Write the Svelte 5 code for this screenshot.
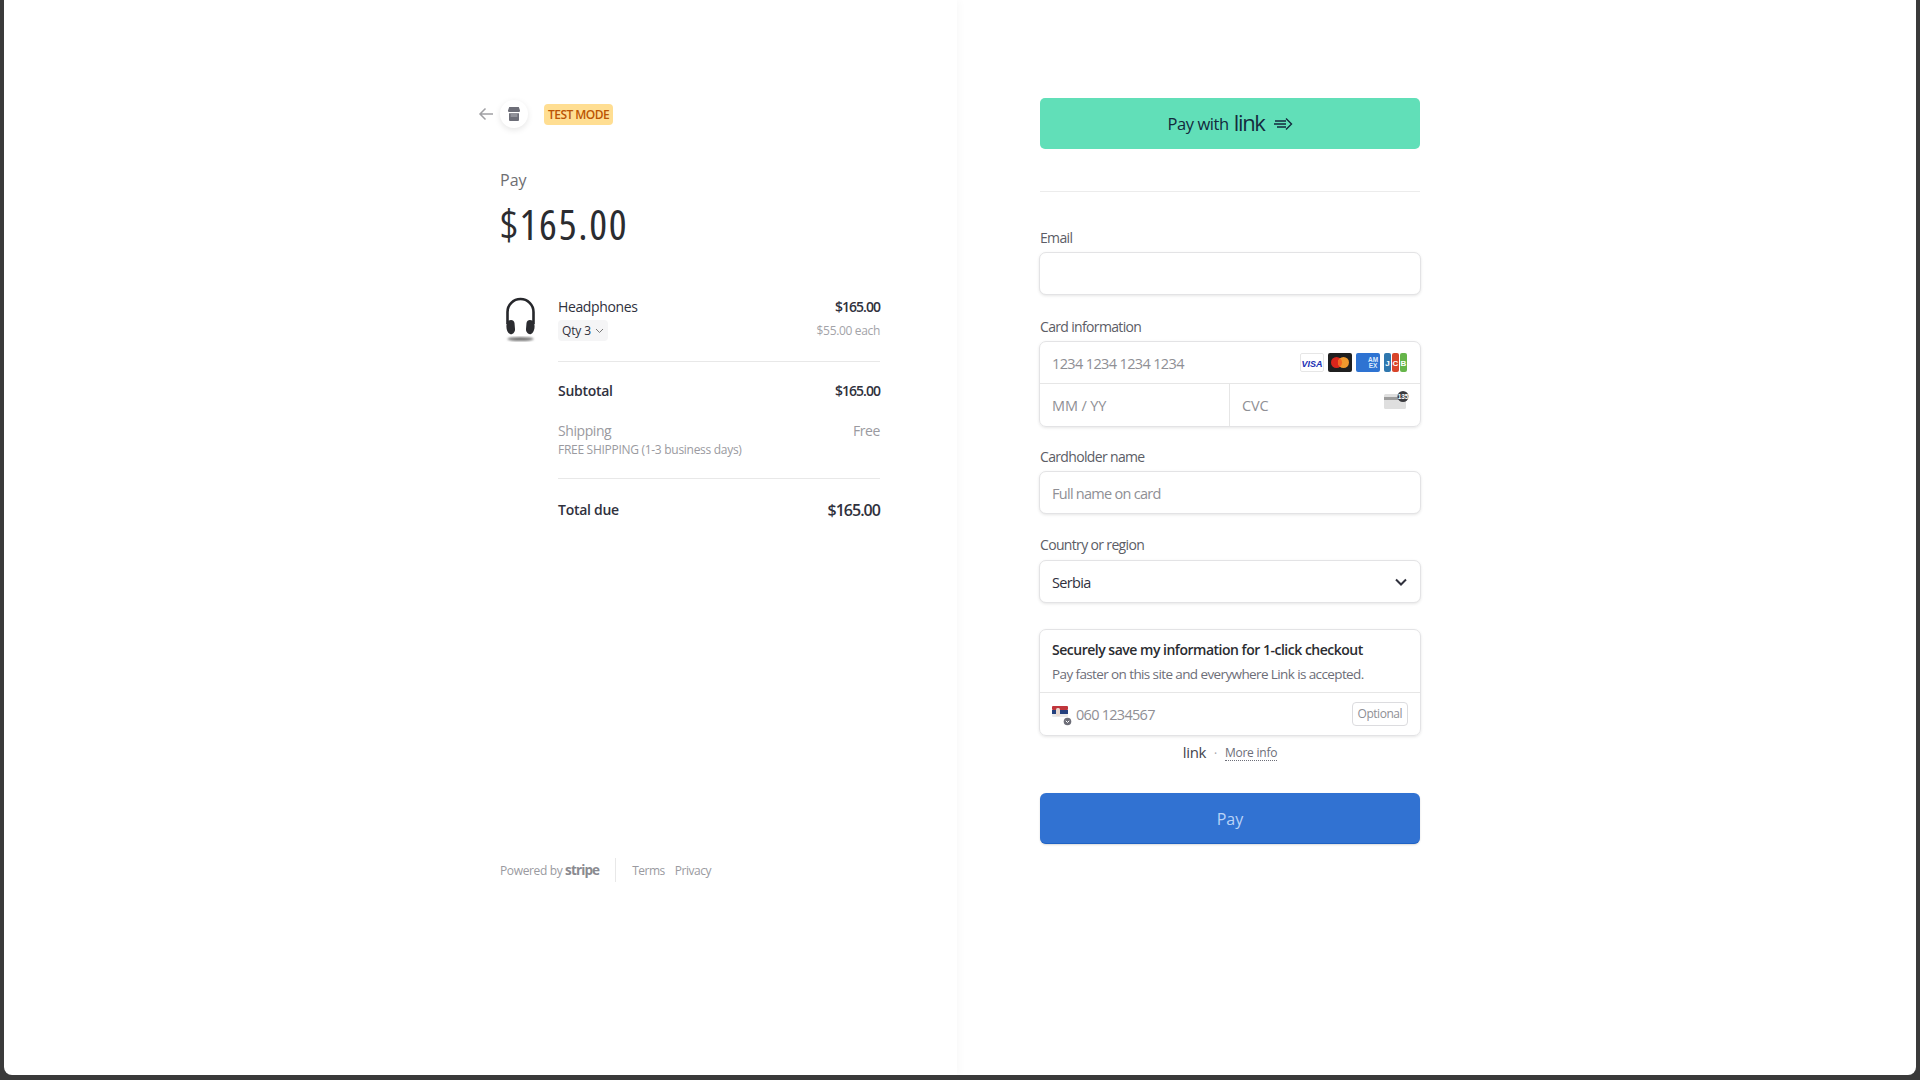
<script>
  let email = $state("");
  let name = $state("");
  const totals = [
    { label: "Subtotal", value: "$165.00" }
  ];
</script>

<div class="frame">
  <div class="page">
    <section class="summary">
      <div class="summary-inner">
        <header class="top">
          <svg class="back" width="16" height="14" viewBox="0 0 16 14" fill="none" stroke="#a0a0a4" stroke-width="1.5">
            <path d="M15 7H2M7.5 1.5 2 7l5.5 5.5" />
          </svg>
          <span class="store">
            <svg width="12" height="14" viewBox="0 0 12 14">
              <path d="M1.2 0h9.6L12 3.6a1.6 1.6 0 0 1-1 1.5H1a1.6 1.6 0 0 1-1-1.5z" fill="#6d6e78" />
              <path d="M1 6.2h10V13a1 1 0 0 1-1 1H2a1 1 0 0 1-1-1z" fill="#6d6e78" />
              <rect x="2.6" y="7" width="6.8" height="3" fill="#fff" opacity=".25" />
            </svg>
          </span>
          <span class="badge">TEST MODE</span>
        </header>

        <div class="pay-label">Pay</div>
        <div class="amount">$165.00</div>

        <div class="item">
          <svg class="thumb" width="40" height="48" viewBox="0 0 40 48">
            <defs>
              <filter id="soft"><feGaussianBlur stdDeviation="1.2" /></filter>
            </defs>
            <ellipse cx="20.500" cy="43" rx="13" ry="2" fill="#777" filter="url(#soft)" />
            <path d="M7.500 28V16a13 13 0 0 1 26 0v12" fill="none" stroke="#26272b" stroke-width="2.6" />
            <path d="M8 25c3-2 6-1 6.500 2l.5 6c.3 3-2.500 6-5 5-3.500-1.500-5-9-2-13z" fill="#2b2c30" />
            <path d="M33 25c-3-2-6-1-6.500 2l-.5 6c-.3 3 2.500 6 5 5 3.500-1.500 5-9 2-13z" fill="#2b2c30" />
          </svg>
          <div class="item-body">
            <div class="item-row">
              <span class="item-name">Headphones</span>
              <span class="strong">$165.00</span>
            </div>
            <div class="item-row sub-row">
              <span class="qty">Qty 3
                <svg width="9" height="6" viewBox="0 0 9 6" fill="none" stroke="#777" stroke-width="1"><path d="M1 1l3.500 3.500L8 1" /></svg>
              </span>
              <span class="each">$55.00 each</span>
            </div>
          </div>
        </div>

        <div class="totals">
          {#each totals as t}
            <div class="line subtotal">
              <span class="semi">{t.label}</span>
              <span class="strong">{t.value}</span>
            </div>
          {/each}
          <div class="line shipping">
            <div>
              <div class="ship-name">Shipping</div>
              <div class="ship-note">FREE SHIPPING (1-3 business days)</div>
            </div>
            <span class="ship-name">Free</span>
          </div>
          <div class="line total">
            <span class="semi">Total due</span>
            <span class="total-value">$165.00</span>
          </div>
        </div>

        <footer class="foot">
          <span class="powered">Powered by <b class="stripe">stripe</b></span>
          <i class="foot-sep"></i>
          <span class="foot-link">Terms</span>
          <span class="foot-link">Privacy</span>
        </footer>
      </div>
    </section>

    <section class="form">
      <div class="form-inner">
        <button class="link-btn">
          <span>Pay with</span>
          <span class="link-word">link</span>
          <svg width="19" height="14" viewBox="0 0 19 14" fill="none" stroke="#13293d" stroke-width="1.4">
            <path d="M1 4h11M0 7h12M3 10h9M12 1.500 17.500 7 12 12.500" />
          </svg>
        </button>
        <hr class="rule" />

        <label class="field-label first" for="email">Email</label>
        <input id="email" class="box" bind:value={email} />

        <div class="field-label">Card information</div>
        <div class="card-box">
          <div class="card-row">
            <span class="ph digits">1234 1234 1234 1234</span>
            <span class="brands">
              <svg width="24" height="19" viewBox="0 0 24 19">
                <rect x=".5" y=".5" width="23" height="18" rx="1.500" fill="#fff" stroke="#e6e6e6" />
                <text x="12" y="13.500" text-anchor="middle" class="visa">VISA</text>
              </svg>
              <svg width="24" height="19" viewBox="0 0 24 19">
                <rect width="24" height="19" rx="2" fill="#1f1f1f" />
                <circle cx="8.500" cy="9.500" r="5.500" fill="#d9261c" />
                <circle cx="15.500" cy="9.500" r="5.500" fill="#f0992e" />
                <path d="M12 5.200a5.500 5.500 0 0 1 0 8.600 5.500 5.500 0 0 1 0-8.600z" fill="#f26522" />
              </svg>
              <svg width="24" height="19" viewBox="0 0 24 19">
                <rect width="24" height="19" rx="2" fill="#2e73d2" />
                <text x="17" y="8.500" text-anchor="middle" class="amex">AM</text>
                <text x="17" y="15" text-anchor="middle" class="amex">EX</text>
              </svg>
              <svg width="23" height="19" viewBox="0 0 23 19">
                <rect width="7" height="19" rx="2" fill="#2f77ae" />
                <rect x="8" width="7" height="19" rx="2" fill="#d8442a" />
                <rect x="16" width="7" height="19" rx="2" fill="#66b54a" />
                <text x="3.500" y="13" text-anchor="middle" class="jcb">J</text>
                <text x="11.500" y="13" text-anchor="middle" class="jcb">C</text>
                <text x="19.500" y="13" text-anchor="middle" class="jcb">B</text>
              </svg>
            </span>
          </div>
          <div class="card-split">
            <div class="cell expiry"><span class="ph">MM / YY</span></div>
            <div class="cell cvc">
              <span class="ph">CVC</span>
              <svg class="cvc-icon" width="25" height="18" viewBox="0 0 25 18">
                <rect x="0" y="3" width="22" height="15" rx="1.500" fill="#dfdfdf" />
                <rect x="0" y="6" width="22" height="3" fill="#9d9d9d" />
                <circle cx="19" cy="5.500" r="5.500" fill="#3b3b3f" />
                <text x="19" y="8" text-anchor="middle" class="cvc-num">135</text>
              </svg>
            </div>
          </div>
        </div>

        <label class="field-label cardholder" for="cardholder">Cardholder name</label>
        <input id="cardholder" class="box" placeholder="Full name on card" bind:value={name} />

        <div class="field-label country">Country or region</div>
        <div class="box select">
          <span>Serbia</span>
          <svg width="12" height="8" viewBox="0 0 12 8" fill="none" stroke="#30313d" stroke-width="2"><path d="M1 1.500l5 5 5-5" /></svg>
        </div>

        <div class="save-box">
          <div class="save-text">
            <div class="save-title">Securely save my information for 1-click checkout</div>
            <div class="save-sub">Pay faster on this site and everywhere Link is accepted.</div>
          </div>
          <div class="phone">
            <span class="flag">
              <svg width="20" height="20" viewBox="0 0 20 20">
                <rect y="0" width="16" height="4" rx="1" fill="#c0363c" />
                <rect y="4" width="16" height="4" fill="#24407e" />
                <rect y="8" width="16" height="3" rx="1" fill="#e8e8e8" />
                <rect x="4" y="2" width="4" height="8" rx="1.500" fill="#e9d9d0" />
                <circle cx="15.500" cy="15.500" r="3.800" fill="#6d6e78" />
                <path d="M13.800 14.800l1.700 1.700 1.700-1.700" fill="none" stroke="#fff" stroke-width="1" />
              </svg>
            </span>
            <span class="phone-ph">060 1234567</span>
            <span class="optional">Optional</span>
          </div>
        </div>

        <div class="link-row">
          <span class="link-mini">link</span>
          <span class="dot">·</span>
          <span class="more">More info</span>
        </div>

        <button class="pay">Pay</button>
      </div>
    </section>
  </div>
</div>

<style>
  :global(body) {
    margin: 0;
    background: #3a3a3a;
  }

  .frame {
    height: 1080px;
    box-sizing: border-box;
    padding: 0 4px 5px 4px;
    background: #3a3a3a;
    font-family: "Open Sans", "Noto Sans", sans-serif;
    font-stretch: 90%;
    font-size: 14px;
    color: #30313d;
  }

  .page {
    height: 100%;
    display: flex;
    background: #fff;
    border-radius: 0 0 8px 8px;
    overflow: hidden;
  }

  .summary {
    width: 953px;
    box-sizing: border-box;
    padding: 100px 0 0 496px;
    box-shadow: 2px 0 8px rgba(0, 0, 0, 0.03);
  }

  .summary-inner {
    width: 380px;
  }

  .top {
    display: flex;
    align-items: center;
    height: 28px;
    margin-left: -22px;
  }

  .back {
    margin-right: 6px;
  }

  .store {
    width: 28px;
    height: 28px;
    border-radius: 50%;
    display: flex;
    align-items: center;
    justify-content: center;
    box-shadow: 0 2px 6px rgba(0, 0, 0, 0.1);
    margin-right: 16px;
  }

  .badge {
    height: 21px;
    line-height: 21px;
    padding: 0 4px;
    background: #ffde92;
    border-radius: 4px;
    color: #bb5504;
    font-size: 12px;
    font-weight: 600;
    letter-spacing: -0.045em;
  }

  .pay-label {
    margin-top: 41px;
    font-size: 16px;
    line-height: 22px;
    color: #6e6e72;
  }

  .amount {
    margin-top: 9px;
    font-stretch: 75%;
    font-size: 42px;
    line-height: 48px;
    font-weight: 500;
    color: #2b2c30;
    letter-spacing: 0.04em;
  }

  .item {
    display: flex;
    margin-top: 48px;
  }

  .thumb {
    width: 40px;
    margin-right: 18px;
    flex: none;
  }

  .item-body {
    flex: 1;
  }

  .item-row {
    display: flex;
    justify-content: space-between;
    align-items: center;
    height: 20px;
  }

  .sub-row {
    height: 21px;
    margin-top: 4px;
  }

  .item-name {
    font-weight: 500;
    letter-spacing: -0.026em;
  }

  .semi {
    font-weight: 600;
    letter-spacing: -0.02em;
  }

  .strong {
    font-weight: 600;
    letter-spacing: -0.07em;
  }

  .qty {
    display: inline-flex;
    align-items: center;
    gap: 4px;
    height: 21px;
    padding: 0 4px;
    background: #f5f5f6;
    border-radius: 4px;
    font-size: 12px;
    font-weight: 500;
    letter-spacing: -0.01em;
  }

  .each {
    font-size: 12px;
    color: #a3a3a8;
    letter-spacing: -0.028em;
  }

  .totals {
    margin-left: 58px;
    margin-top: 17px;
    border-top: 1px solid #e8e8e8;
  }

  .line {
    display: flex;
    justify-content: space-between;
  }

  .subtotal {
    margin-top: 19px;
    line-height: 20px;
  }

  .shipping {
    margin-top: 20px;
    padding-bottom: 20px;
    border-bottom: 1px solid #e8e8e8;
    align-items: flex-start;
  }

  .ship-name {
    line-height: 20px;
    color: #9a9aa0;
    letter-spacing: -0.03em;
  }

  .ship-note {
    font-size: 12px;
    line-height: 17px;
    color: #9a9aa0;
    letter-spacing: -0.024em;
  }

  .total {
    margin-top: 20px;
    line-height: 22px;
    align-items: center;
  }

  .total-value {
    font-size: 16px;
    font-weight: 600;
    letter-spacing: -0.06em;
  }

  .foot {
    display: flex;
    align-items: center;
    margin-top: 337px;
    height: 24px;
    font-size: 12px;
    color: #9a9aa0;
  }

  .powered {
    letter-spacing: -0.03em;
  }

  .stripe {
    font-size: 13.500px;
    font-weight: 700;
    color: #8a8a90;
    letter-spacing: -0.065em;
  }

  .foot-sep {
    width: 1px;
    height: 24px;
    background: #e8e8e8;
    margin: 0 16px;
  }

  .foot-link {
    margin-right: 10px;
    letter-spacing: -0.04em;
  }

  .form {
    flex: 1;
    padding: 98px 0 0 83px;
  }

  .form-inner {
    width: 380px;
  }

  .link-btn {
    width: 100%;
    height: 51px;
    display: flex;
    align-items: center;
    justify-content: center;
    gap: 5px;
    border: 0;
    border-radius: 5px;
    background: #61dfb8;
    font: inherit;
    font-size: 16.500px;
    letter-spacing: -0.025em;
    color: #13293d;
  }

  .link-word {
    font-size: 22px;
    line-height: 24px;
    font-weight: 400;
    margin-top: -4px;
    margin-right: 4px;
    letter-spacing: -0.06em;
  }

  .rule {
    margin: 42px 0 0;
    border: 0;
    border-top: 1px solid #ececec;
  }

  .field-label {
    display: block;
    margin: 22px 0 4px;
    line-height: 20px;
    font-weight: 500;
    color: #5c5d66;
    letter-spacing: -0.047em;
  }

  .field-label.first {
    margin-top: 36px;
    margin-bottom: 4px;
  }

  .cardholder {
    margin-top: 20px;
  }

  .country {
    margin: 21px 0 5px;
  }

  .box {
    display: block;
    width: calc(100% + 2px);
    margin-left: -1px;
    height: 43px;
    box-sizing: border-box;
    padding: 0 12px;
    border: 1px solid #e3e3e5;
    border-radius: 7px;
    background: #fff;
    box-shadow: 0 1px 3px rgba(0, 0, 0, 0.1);
    font: inherit;
    font-size: 16px;
    letter-spacing: -0.045em;
    color: #30313d;
    outline: none;
  }

  .box::placeholder {
    color: #8f8f95;
    font-size: 14.500px;
  }

  .select {
    display: flex;
    align-items: center;
    justify-content: space-between;
    font-size: 14.500px;
    padding-right: 13px;
  }

  .select span {
    margin-top: 2px;
  }

  .card-box {
    height: 86px;
    margin: 0 -1px;
    box-sizing: border-box;
    border: 1px solid #e3e3e5;
    border-radius: 7px;
    box-shadow: 0 1px 3px rgba(0, 0, 0, 0.1);
  }

  .card-row {
    height: 41px;
    display: flex;
    align-items: center;
    justify-content: space-between;
    padding: 0 13px 0 12px;
    border-bottom: 1px solid #e6e6e6;
  }

  .ph {
    font-size: 14.500px;
    color: #8f8f95;
    letter-spacing: -0.01em;
  }

  .digits {
    margin-top: 2px;
    letter-spacing: -0.044em;
  }

  .brands {
    display: flex;
    gap: 4px;
  }

  .brands svg,
  .cvc-icon {
    display: block;
  }

  .visa {
    font: italic 800 9px "Liberation Sans", sans-serif;
    fill: #1a2fb4;
    letter-spacing: 0;
  }

  .amex {
    font: 700 6.500px "Liberation Sans", sans-serif;
    fill: #dcebff;
    letter-spacing: 0;
  }

  .jcb {
    font: 700 8px "Liberation Sans", sans-serif;
    fill: #fff;
    letter-spacing: 0;
  }

  .cvc-num {
    font: 700 6.500px "Liberation Sans", sans-serif;
    fill: #fff;
    letter-spacing: -0.02em;
  }

  .card-split {
    height: 42px;
    display: flex;
  }

  .cell {
    flex: 1;
    display: flex;
    align-items: center;
    padding: 0 12px;
  }

  .expiry {
    flex: 0 0 165px;
  }

  .cvc {
    justify-content: space-between;
    border-left: 1px solid #e6e6e6;
    padding-right: 11px;
  }

  .cvc-icon {
    margin-top: -10px;
  }

  .save-box {
    margin: 26px -1px 0;
    height: 107px;
    box-sizing: border-box;
    border: 1px solid #e3e3e5;
    border-radius: 7px;
    box-shadow: 0 1px 3px rgba(0, 0, 0, 0.1);
  }

  .save-text {
    height: 63px;
    box-sizing: border-box;
    padding: 10px 12px 0;
    border-bottom: 1px solid #e6e6e6;
  }

  .save-title {
    font-weight: 600;
    line-height: 20px;
    color: #2b2c30;
    letter-spacing: -0.035em;
  }

  .save-sub {
    margin-top: 4px;
    line-height: 20px;
    color: #6d6e78;
    font-size: 13.500px;
    letter-spacing: -0.045em;
  }

  .phone {
    height: 42px;
    display: flex;
    align-items: center;
    padding: 0 12px;
  }

  .flag {
    display: flex;
    width: 24px;
    margin-top: 3px;
  }

  .phone-ph {
    flex: 1;
    font-size: 14.500px;
    color: #8f8f95;
    letter-spacing: -0.05em;
  }

  .optional {
    height: 24px;
    line-height: 22px;
    box-sizing: border-box;
    padding: 0 5px;
    border: 1px solid #dcdcdf;
    border-radius: 4px;
    font-size: 12px;
    color: #8f8f95;
    letter-spacing: -0.04em;
  }

  .link-row {
    display: flex;
    justify-content: center;
    align-items: center;
    gap: 8px;
    height: 20px;
    margin-top: 7px;
    font-size: 12px;
    color: #6d6e78;
    letter-spacing: -0.02em;
  }

  .link-mini {
    font-size: 15px;
    color: #44454d;
    margin-top: -2px;
    letter-spacing: -0.025em;
  }

  .dot {
    color: #a3a3a8;
  }

  .more {
    border-bottom: 1px dotted #6d6e78;
    line-height: 14px;
  }

  .pay {
    display: block;
    width: 100%;
    height: 51px;
    margin-top: 30px;
    padding-top: 2px;
    border: 0;
    border-bottom: 1px solid #1f62c4;
    border-radius: 6px;
    background: #3172d2;
    box-shadow: 0 1px 2px rgba(0, 0, 0, 0.15);
    font: inherit;
    font-size: 16px;
    font-weight: 500;
    color: #b9d3f7;
  }
</style>
